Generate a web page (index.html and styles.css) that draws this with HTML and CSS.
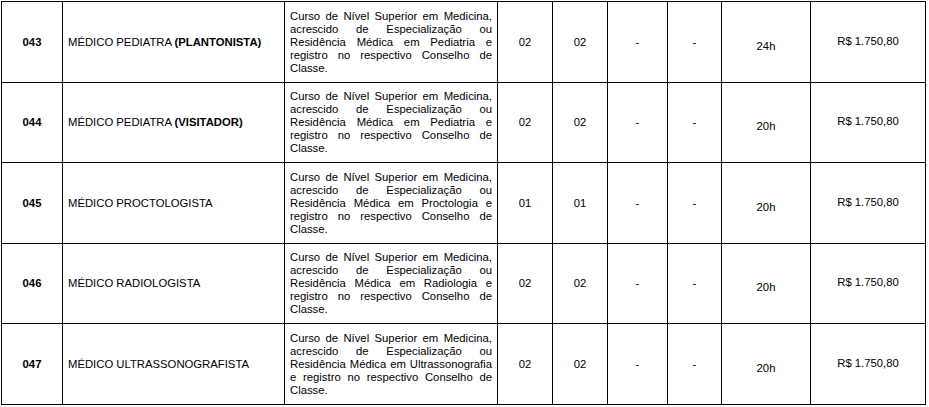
FILE: index.html
```html
<!DOCTYPE html>
<html lang="pt-BR">
<head>
<meta charset="utf-8">
<title>Cargos</title>
<link rel="stylesheet" href="styles.css">
</head>
<body>
<table class="grid">
  <colgroup>
    <col class="c-code"><col class="c-name"><col class="c-req"><col class="c-n1"><col class="c-n2"><col class="c-d1"><col class="c-d2"><col class="c-h"><col class="c-sal">
  </colgroup>
  <tbody>
    <tr class="r-a">
      <td class="code">043</td>
      <td class="name">MÉDICO PEDIATRA <b>(PLANTONISTA)</b></td>
      <td class="req">Curso de Nível Superior em Medicina, acrescido de Especialização ou Residência Médica em Pediatria e registro no respectivo Conselho de Classe.</td>
      <td class="num">02</td>
      <td class="num">02</td>
      <td class="num">-</td>
      <td class="num">-</td>
      <td class="hours">24h</td>
      <td class="sal">R$ 1.750,80</td>
    </tr>
    <tr class="r-b">
      <td class="code">044</td>
      <td class="name">MÉDICO PEDIATRA <b>(VISITADOR)</b></td>
      <td class="req">Curso de Nível Superior em Medicina, acrescido de Especialização ou Residência Médica em Pediatria e registro no respectivo Conselho de Classe.</td>
      <td class="num">02</td>
      <td class="num">02</td>
      <td class="num">-</td>
      <td class="num">-</td>
      <td class="hours">20h</td>
      <td class="sal">R$ 1.750,80</td>
    </tr>
    <tr class="r-a">
      <td class="code">045</td>
      <td class="name">MÉDICO PROCTOLOGISTA</td>
      <td class="req">Curso de Nível Superior em Medicina, acrescido de Especialização ou Residência Médica em Proctologia e registro no respectivo Conselho de Classe.</td>
      <td class="num">01</td>
      <td class="num">01</td>
      <td class="num">-</td>
      <td class="num">-</td>
      <td class="hours">20h</td>
      <td class="sal">R$ 1.750,80</td>
    </tr>
    <tr class="r-b">
      <td class="code">046</td>
      <td class="name">MÉDICO RADIOLOGISTA</td>
      <td class="req">Curso de Nível Superior em Medicina, acrescido de Especialização ou Residência Médica em Radiologia e registro no respectivo Conselho de Classe.</td>
      <td class="num">02</td>
      <td class="num">02</td>
      <td class="num">-</td>
      <td class="num">-</td>
      <td class="hours">20h</td>
      <td class="sal">R$ 1.750,80</td>
    </tr>
    <tr class="r-a">
      <td class="code">047</td>
      <td class="name">MÉDICO ULTRASSONOGRAFISTA</td>
      <td class="req">Curso de Nível Superior em Medicina, acrescido de Especialização ou Residência Médica em Ultrassonografia e registro no respectivo Conselho de Classe.</td>
      <td class="num">02</td>
      <td class="num">02</td>
      <td class="num">-</td>
      <td class="num">-</td>
      <td class="hours">20h</td>
      <td class="sal">R$ 1.750,80</td>
    </tr>
  </tbody>
</table>
</body>
</html>
```
FILE: styles.css
```css
html, body {
  margin: 0;
  padding: 0;
  background: #ffffff;
}

body {
  padding: 1px 0 0 1px;
  font-family: "Liberation Sans", Arial, sans-serif;
  font-size: 11.3px;
  color: #000000;
}

.grid {
  border-collapse: collapse;
  table-layout: fixed;
  width: 924px;
}

.c-code { width: 61px; }
.c-name { width: 222px; }
.c-req { width: 213px; }
.c-n1 { width: 55px; }
.c-n2 { width: 55px; }
.c-d1 { width: 60px; }
.c-d2 { width: 54px; }
.c-h { width: 89px; }
.c-sal { width: 115px; }

.grid td {
  border: 1px solid #000000;
  vertical-align: middle;
  padding: 0 5px;
  line-height: 13px;
}

.r-a { height: 81px; }
.r-b { height: 80px; }

.code {
  text-align: center;
  font-weight: bold;
}

.name {
  text-align: left;
}

.req {
  text-align: justify;
}

.num {
  text-align: center;
}

.hours {
  text-align: center;
  padding-top: 8px !important;
}

.sal {
  text-align: center;
  padding-bottom: 2px !important;
}
```
